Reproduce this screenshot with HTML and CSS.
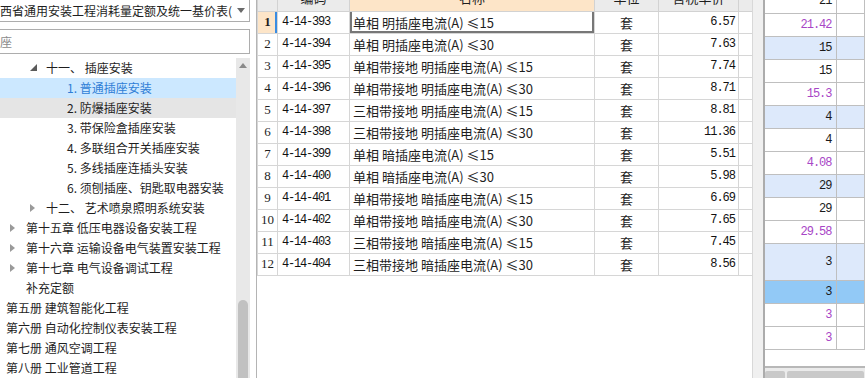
FILE: index.html
```html
<html>

<head>
  <meta charset="utf8">
  <title>定额库</title>
  <link rel="stylesheet" href="styles.css">
</head>

<body>
  <div class="app">
    <aside class="side">
      <div class="combo">
        <span class="combo-text">西省通用安装工程消耗量定额及统一基价表(</span>
        <svg class="combo-arrow" width="8" height="5" viewBox="0 0 8 5"><path d="M0 0H8L4 5Z" fill="#6a6a6a"/></svg>
      </div>
      <div class="search">座</div>
      <div class="tree-wrap">
        <ul class="tree">
          <li class="node lv3"><span class="tw"><svg width="7" height="7" viewBox="0 0 7 7"><path d="M7 0V7H0Z" fill="#5a5a5a"/></svg></span>十一、 插座安装</li>
          <li class="node lv4 selected">1. 普通插座安装</li>
          <li class="node lv4 hover">2. 防爆插座安装</li>
          <li class="node lv4">3. 带保险盒插座安装</li>
          <li class="node lv4">4. 多联组合开关插座安装</li>
          <li class="node lv4">5. 多线插座连插头安装</li>
          <li class="node lv4">6. 须刨插座、钥匙取电器安装</li>
          <li class="node lv3"><span class="tw"><svg width="5" height="8" viewBox="0 0 5 8"><path d="M0 0L5 4L0 8Z" fill="#9a9a9a"/></svg></span>十二、 艺术喷泉照明系统安装</li>
          <li class="node lv2"><span class="tw"><svg width="5" height="8" viewBox="0 0 5 8"><path d="M0 0L5 4L0 8Z" fill="#9a9a9a"/></svg></span>第十五章 低压电器设备安装工程</li>
          <li class="node lv2"><span class="tw"><svg width="5" height="8" viewBox="0 0 5 8"><path d="M0 0L5 4L0 8Z" fill="#9a9a9a"/></svg></span>第十六章 运输设备电气装置安装工程</li>
          <li class="node lv2"><span class="tw"><svg width="5" height="8" viewBox="0 0 5 8"><path d="M0 0L5 4L0 8Z" fill="#9a9a9a"/></svg></span>第十七章 电气设备调试工程</li>
          <li class="node lv2 leaf">补充定额</li>
          <li class="node lv1">第五册 建筑智能化工程</li>
          <li class="node lv1">第六册 自动化控制仪表安装工程</li>
          <li class="node lv1">第七册 通风空调工程</li>
          <li class="node lv1">第八册 工业管道工程</li>
        </ul>
        <div class="vbar">
          <svg class="vbar-up" width="8" height="5" viewBox="0 0 8 5"><path d="M0 5H8L4 0Z" fill="#8a8a8a"/></svg>
          <div class="vbar-thumb"></div>
        </div>
      </div>
    </aside>

    <main class="grid">
      <div class="grid-body">
        <table class="quota">
          <colgroup>
            <col class="c-no"><col class="c-code"><col class="c-name"><col class="c-unit"><col class="c-price"><col class="c-pad">
          </colgroup>
          <thead>
            <tr>
              <th></th><th>编码</th><th class="active">名称</th><th>单位</th><th>含税单价</th><th></th>
            </tr>
          </thead>
          <tbody>
            <tr class="current"><td class="no">1</td><td class="code">4-14-393</td><td class="name focus">单相 明插座电流(A) ≤15</td><td class="unit">套</td><td class="price">6.57</td><td></td></tr>
            <tr><td class="no">2</td><td class="code">4-14-394</td><td class="name">单相 明插座电流(A) ≤30</td><td class="unit">套</td><td class="price">7.63</td><td></td></tr>
            <tr><td class="no">3</td><td class="code">4-14-395</td><td class="name">单相带接地 明插座电流(A) ≤15</td><td class="unit">套</td><td class="price">7.74</td><td></td></tr>
            <tr><td class="no">4</td><td class="code">4-14-396</td><td class="name">单相带接地 明插座电流(A) ≤30</td><td class="unit">套</td><td class="price">8.71</td><td></td></tr>
            <tr><td class="no">5</td><td class="code">4-14-397</td><td class="name">三相带接地 明插座电流(A) ≤15</td><td class="unit">套</td><td class="price">8.81</td><td></td></tr>
            <tr><td class="no">6</td><td class="code">4-14-398</td><td class="name">三相带接地 明插座电流(A) ≤30</td><td class="unit">套</td><td class="price">11.36</td><td></td></tr>
            <tr><td class="no">7</td><td class="code">4-14-399</td><td class="name">单相 暗插座电流(A) ≤15</td><td class="unit">套</td><td class="price">5.51</td><td></td></tr>
            <tr><td class="no">8</td><td class="code">4-14-400</td><td class="name">单相 暗插座电流(A) ≤30</td><td class="unit">套</td><td class="price">5.98</td><td></td></tr>
            <tr><td class="no">9</td><td class="code">4-14-401</td><td class="name">单相带接地 暗插座电流(A) ≤15</td><td class="unit">套</td><td class="price">6.69</td><td></td></tr>
            <tr><td class="no">10</td><td class="code">4-14-402</td><td class="name">单相带接地 暗插座电流(A) ≤30</td><td class="unit">套</td><td class="price">7.65</td><td></td></tr>
            <tr><td class="no">11</td><td class="code">4-14-403</td><td class="name">三相带接地 暗插座电流(A) ≤15</td><td class="unit">套</td><td class="price">7.45</td><td></td></tr>
            <tr><td class="no">12</td><td class="code">4-14-404</td><td class="name">三相带接地 暗插座电流(A) ≤30</td><td class="unit">套</td><td class="price">8.56</td><td></td></tr>
          </tbody>
        </table>
      </div>
      <div class="vscroll"></div>
    </main>

    <section class="summary">
      <div class="sum-rows">
        <table class="sum">
          <colgroup><col class="s-val"><col></colgroup>
          <tr><td class="val">21</td><td></td></tr>
          <tr class="calc"><td class="val">21.42</td><td></td></tr>
          <tr class="group"><td class="val">15</td><td></td></tr>
          <tr><td class="val">15</td><td></td></tr>
          <tr class="calc"><td class="val">15.3</td><td></td></tr>
          <tr class="group"><td class="val">4</td><td></td></tr>
          <tr><td class="val">4</td><td></td></tr>
          <tr class="calc"><td class="val">4.08</td><td></td></tr>
          <tr class="group"><td class="val">29</td><td></td></tr>
          <tr><td class="val">29</td><td></td></tr>
          <tr class="calc"><td class="val">29.58</td><td></td></tr>
          <tr class="group tall"><td class="val">3</td><td></td></tr>
          <tr class="picked"><td class="val">3</td><td></td></tr>
          <tr class="calc"><td class="val">3</td><td></td></tr>
          <tr class="calc"><td class="val">3</td><td></td></tr>
        </table>
      </div>
      <div class="hscroll">
        <div class="hs-btn"></div>
        <div class="hs-thumb"></div>
      </div>
    </section>
  </div>
</body>

</html>
```

FILE: styles.css
```css
* {
  margin: 0;
  padding: 0;
  box-sizing: border-box;
}

body {
  font-family: "Noto Sans CJK SC", "Noto Sans", sans-serif;
  font-size: 12px;
  color: #1e1e1e;
  background: #fff;
  overflow: hidden;
}

table {
  font-size: 12px;
  color: #1e1e1e;
}

.app {
  display: flex;
  width: 865px;
  height: 378px;
  overflow: hidden;
}

/* left tree panel */
.side {
  width: 250px;
  height: 378px;
  display: flex;
  flex-direction: column;
  overflow: hidden;
}

.combo {
  height: 22px;
  display: flex;
  align-items: center;
  justify-content: space-between;
  border-right: 1px solid #adadad;
  border-bottom: 1px solid #adadad;
  padding-right: 4px;
}

.combo-text {
  line-height: 21px;
  white-space: nowrap;
  overflow: hidden;
}

.search {
  margin-top: 7px;
  height: 25px;
  line-height: 23px;
  border: 1px solid #adadad;
  border-left: none;
  color: #8c8c8c;
}

.tree-wrap {
  margin-top: 4px;
  flex: 1;
  display: flex;
  overflow: hidden;
}

.tree {
  flex: 1;
  list-style: none;
}

.node {
  height: 20px;
  line-height: 20px;
  white-space: nowrap;
  overflow: hidden;
}

.node.lv1 { padding-left: 6px; }
.node.lv2 { padding-left: 10px; }
.node.lv2.leaf { padding-left: 26px; }
.node.lv3 { padding-left: 30px; }
.node.lv4 { padding-left: 67px; }

.tw {
  display: inline-block;
  width: 16px;
  vertical-align: top;
}

.tw svg {
  display: block;
  margin-top: 6px;
}

.node.selected {
  background: #cce8ff;
  color: #2f7ed6;
}

.node.hover {
  background: #e5e5e5;
}

.vbar {
  width: 14px;
  background: #e8e8e8;
  display: flex;
  flex-direction: column;
  align-items: center;
}

.vbar-up {
  margin-top: 5px;
}

.vbar-thumb {
  margin-top: auto;
  width: 10px;
  height: 78px;
  border-radius: 5px 5px 0 0;
  background: #c1c1c1;
}

/* quota grid */
.grid {
  margin-left: 6px;
  display: flex;
  height: 378px;
}

.grid-body {
  width: 496px;
  border-left: 1px solid #b4b4b4;
  overflow: hidden;
}

.quota {
  border-collapse: collapse;
  table-layout: fixed;
  width: 495px;
  margin-top: -11px;
}

.c-no { width: 20px; }
.c-code { width: 72px; }
.c-name { width: 245px; }
.c-unit { width: 64px; }
.c-price { width: 80px; }
.c-pad { width: 14px; }

.quota th {
  height: 22px;
  line-height: 18px;
  vertical-align: top;
  font-weight: normal;
  font-size: 13px;
  background: #ebebeb;
  border: 1px solid #d2d2d2;
  border-top: none;
}

.quota th.active {
  background: #fde5c8;
}

.quota td {
  height: 22px;
  padding: 0;
  border: 1px solid #d6d6d6;
  white-space: nowrap;
  overflow: hidden;
}

.quota td.no {
  text-align: center;
  font-family: "Liberation Serif", serif;
  font-size: 13px;
}

.quota tr.current td.no {
  background: #fde5c8;
  font-weight: bold;
  box-shadow: inset -2px 0 0 #3a8ce2;
}

.quota td.code {
  padding-left: 4px;
  font-family: "Liberation Mono", monospace;
  font-size: 12px;
  letter-spacing: -1.2px;
  color: #111;
}

.quota td.name {
  padding-left: 3px;
  font-size: 13px;
}

.quota td.focus {
  box-shadow: inset 2px -2px 0 #777, inset -2px 0 0 #777;
}

.quota td.unit {
  text-align: center;
  font-size: 13px;
}

.quota td.price {
  text-align: right;
  padding-right: 3px;
  font-family: "Liberation Mono", monospace;
  font-size: 12px;
  letter-spacing: -1px;
  color: #111;
}

.vscroll {
  width: 11px;
  background: #f0f0f0;
  border-left: 1px solid #d8d8d8;
}

/* right summary column */
.summary {
  width: 102px;
  height: 378px;
  border-left: 2px solid #acacac;
  display: flex;
  flex-direction: column;
}

.sum-rows {
  flex: 1;
  overflow: hidden;
}

.sum {
  border-collapse: collapse;
  table-layout: fixed;
  width: 100px;
  margin-top: -10px;
}

.s-val { width: 71px; }

.sum td {
  height: 23px;
  padding: 0;
  border-bottom: 1px solid #bfbfbf;
  border-right: 1px solid #bfbfbf;
}

.sum td.val {
  text-align: right;
  padding-right: 4px;
  font-family: "Liberation Mono", monospace;
  font-size: 12px;
  letter-spacing: -1px;
  color: #1a1a1a;
}

.sum tr.calc td.val {
  color: #a846c6;
}

.sum tr.group td {
  background: #dde9fb;
}

.sum tr.tall td {
  height: 37px;
}

.sum tr.picked td {
  background: #92c9f6;
}

.hscroll {
  height: 12px;
  border-top: 2px solid #b8b8b8;
  background: #ebebeb;
  display: flex;
  align-items: flex-end;
  gap: 2px;
}

.hs-btn {
  width: 20px;
  height: 7px;
  background: #c9c9c9;
  border-radius: 2px 2px 0 0;
}

.hs-thumb {
  width: 77px;
  height: 7px;
  background: #c9c9c9;
  border-radius: 2px 2px 0 0;
}
```
